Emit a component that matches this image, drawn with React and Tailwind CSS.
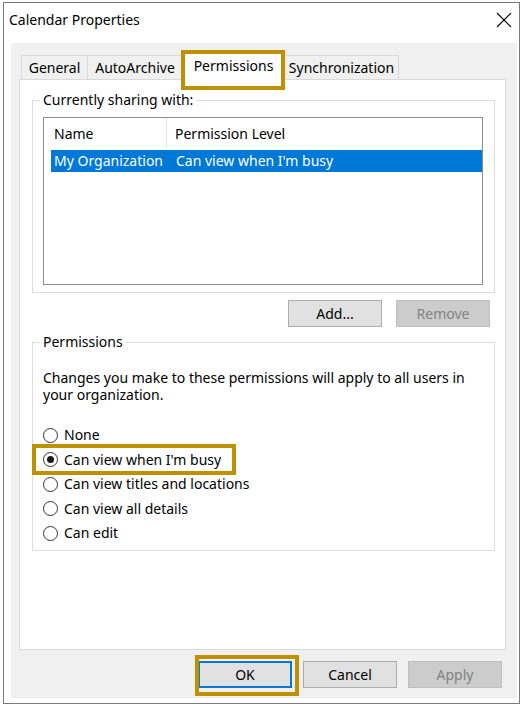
import React from "react";

const tabs = [
  { label: "General", w: "w-[67px]" },
  { label: "AutoArchive", w: "w-[96px]" },
  { label: "Permissions", w: "w-[103px]", active: true },
  { label: "Synchronization", w: "w-[115px]" },
];

const levels = [
  "None",
  "Can view when I'm busy",
  "Can view titles and locations",
  "Can view all details",
  "Can edit",
];

function Radio({ checked }) {
  return (
    <span className="w-[15px] h-[15px] rounded-full border border-[#333333] bg-white flex items-center justify-center shrink-0">
      {checked && <span className="w-[7px] h-[7px] rounded-full bg-[#1a1a1a]" />}
    </span>
  );
}

function Button({ children, disabled, primary, className = "" }) {
  return (
    <div
      className={`relative w-[94px] h-[27px] flex items-center justify-center ${
        disabled
          ? "bg-[#cccccc] border border-[#bfbfbf] text-[#838383]"
          : primary
          ? "bg-[#e1e1e1] border-2 border-[#0078d7]"
          : "bg-[#e1e1e1] border border-[#adadad]"
      } ${className}`}
    >
      {children}
    </div>
  );
}

export default function App() {
  return (
    <div className="w-[527px] h-[710px] bg-white pt-[2px] pl-[3px] font-['Noto_Sans',sans-serif] text-[14px] leading-[18px] text-black">
      <div className="w-[517px] h-[702px] border border-[#7a7a7a] bg-white flex flex-col">
        {/* Title bar */}
        <div className="h-[40px] flex items-start justify-between pl-[5px] pr-[7px] pt-[6px]">
          <span className="text-[14px] leading-[22px]">Calendar Properties</span>
          <svg width="16" height="16" viewBox="0 0 16 16" className="mt-[3px]">
            <path d="M1 1 L15 15 M15 1 L1 15" stroke="#000" strokeWidth="1.1" fill="none" />
          </svg>
        </div>

        {/* Dialog body */}
        <div className="ml-[7px] w-[506px] h-[655px] bg-[#f0f0f0] pt-[10px] pl-[8px] flex flex-col">
          {/* Tabs */}
          <div className="relative z-10 flex items-end h-[27px] mb-[-1px] pl-[2px]">
            {tabs.map((t) =>
              t.active ? (
                <div
                  key={t.label}
                  className={`relative ${t.w} h-[27px] -ml-px bg-white border border-b-0 border-[#d9d9d9] flex justify-center pt-[3px]`}
                >
                  {t.label}
                  <span className="absolute left-[-2px] top-[-4px] w-[104px] h-[40px] border-4 border-[#bf9000]" />
                </div>
              ) : (
                <div
                  key={t.label}
                  className={`${t.w} h-[25px] -ml-px first:ml-0 bg-[#f0f0f0] border border-[#d9d9d9] flex justify-center pt-[3px]`}
                >
                  {t.label}
                </div>
              )
            )}
          </div>

          {/* Tab page */}
          <div className="w-[487px] h-[571px] bg-white border border-[#d9d9d9] pt-[11px] pl-[12px] flex flex-col">
            <fieldset className="w-[463px] border border-[#dcdcdc] pl-[10px] pb-[7px]">
              <legend className="ml-[-3px] px-[3px]">Currently sharing with:</legend>
              <div className="mt-[8px] w-[440px] h-[168px] border border-[#8c8c8c] bg-white">
                <div className="flex h-[31px] items-center">
                  <div className="w-[123px] h-full border-r border-[#e5e5e5] pl-[10px] flex items-center">Name</div>
                  <div className="pl-[8px]">Permission Level</div>
                </div>
                <div className="ml-[7px] mt-px h-[22px] bg-[#0078d7] text-white flex items-center">
                  <div className="w-[116px] pl-[3px] whitespace-nowrap">My Organization</div>
                  <div className="pl-[9px]">Can view when I'm busy</div>
                </div>
              </div>
            </fieldset>

            <div className="w-[458px] flex justify-end gap-[14px] mt-[7px]">
              <Button>Add...</Button>
              <Button disabled>Remove</Button>
            </div>

            <fieldset className="w-[463px] mt-[6px] border border-[#dcdcdc] pl-[10px] pb-[4px]">
              <legend className="ml-[-3px] px-[3px]">Permissions</legend>
              <p className="mt-[18px] leading-[17px] pr-[16px]">
                Changes you make to these permissions will apply to all users in your organization.
              </p>
              <div className="mt-[20px] flex flex-col">
                {levels.map((l, i) => (
                  <div key={l} className="relative h-[24.5px] flex items-center gap-[6px]">
                    <Radio checked={i === 1} />
                    <span>{l}</span>
                    {i === 1 && (
                      <span className="absolute left-[-11px] top-[-4px] w-[204px] h-[31px] border-4 border-[#bf9000]" />
                    )}
                  </div>
                ))}
              </div>
            </fieldset>
          </div>

          {/* Dialog buttons */}
          <div className="w-[483px] flex justify-end gap-[11px] mt-[11px]">
            <Button primary>
              OK
              <span className="absolute left-[-5px] top-[-8px] w-[104px] h-[41px] border-4 border-[#bf9000]" />
            </Button>
            <Button>Cancel</Button>
            <Button disabled>Apply</Button>
          </div>
        </div>
      </div>
    </div>
  );
}
